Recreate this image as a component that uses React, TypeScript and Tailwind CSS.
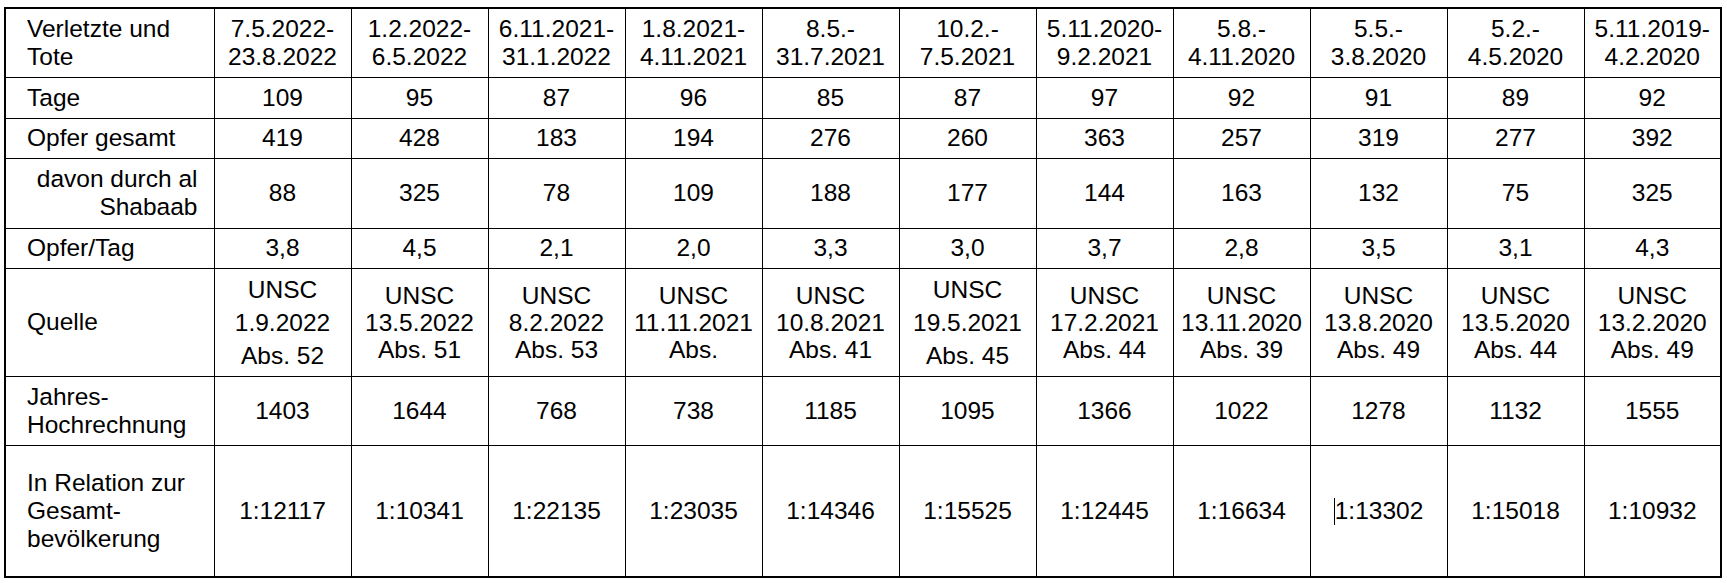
import React from "react";

type Col = {
  period: [string, string];
  tage: string;
  opfer: string;
  shabaab: string;
  proTag: string;
  quelle: [string, string];
  wide?: boolean;
  hoch: string;
  relation: string;
  cursor?: boolean;
};

const cols: Col[] = [
  { period: ["7.5.2022-", "23.8.2022"], tage: "109", opfer: "419", shabaab: "88", proTag: "3,8", quelle: ["1.9.2022", "Abs. 52"], wide: true, hoch: "1403", relation: "1:12117" },
  { period: ["1.2.2022-", "6.5.2022"], tage: "95", opfer: "428", shabaab: "325", proTag: "4,5", quelle: ["13.5.2022", "Abs. 51"], hoch: "1644", relation: "1:10341" },
  { period: ["6.11.2021-", "31.1.2022"], tage: "87", opfer: "183", shabaab: "78", proTag: "2,1", quelle: ["8.2.2022", "Abs. 53"], hoch: "768", relation: "1:22135" },
  { period: ["1.8.2021-", "4.11.2021"], tage: "96", opfer: "194", shabaab: "109", proTag: "2,0", quelle: ["11.11.2021", "Abs."], hoch: "738", relation: "1:23035" },
  { period: ["8.5.-", "31.7.2021"], tage: "85", opfer: "276", shabaab: "188", proTag: "3,3", quelle: ["10.8.2021", "Abs. 41"], hoch: "1185", relation: "1:14346" },
  { period: ["10.2.-", "7.5.2021"], tage: "87", opfer: "260", shabaab: "177", proTag: "3,0", quelle: ["19.5.2021", "Abs. 45"], wide: true, hoch: "1095", relation: "1:15525" },
  { period: ["5.11.2020-", "9.2.2021"], tage: "97", opfer: "363", shabaab: "144", proTag: "3,7", quelle: ["17.2.2021", "Abs. 44"], hoch: "1366", relation: "1:12445" },
  { period: ["5.8.-", "4.11.2020"], tage: "92", opfer: "257", shabaab: "163", proTag: "2,8", quelle: ["13.11.2020", "Abs. 39"], hoch: "1022", relation: "1:16634" },
  { period: ["5.5.-", "3.8.2020"], tage: "91", opfer: "319", shabaab: "132", proTag: "3,5", quelle: ["13.8.2020", "Abs. 49"], hoch: "1278", relation: "1:13302", cursor: true },
  { period: ["5.2.-", "4.5.2020"], tage: "89", opfer: "277", shabaab: "75", proTag: "3,1", quelle: ["13.5.2020", "Abs. 44"], hoch: "1132", relation: "1:15018" },
  { period: ["5.11.2019-", "4.2.2020"], tage: "92", opfer: "392", shabaab: "325", proTag: "4,3", quelle: ["13.2.2020", "Abs. 49"], hoch: "1555", relation: "1:10932" },
];

const cell = "border border-black text-center align-middle p-0 whitespace-nowrap";
const head = "border border-black text-left align-middle pl-[21px] pr-1 p-0";

export default function App() {
  return (
    <div className="min-h-screen bg-white pt-[7px] pl-[4px] font-['Liberation_Sans',Arial,sans-serif] text-[24.5px] leading-[28px] text-black">
      <table className="table-fixed border-collapse border-2 border-black w-[1718px]">
        <colgroup>
          <col className="w-[209px]" />
          {cols.map((_, i) => (
            <col key={i} className="w-[137px]" />
          ))}
        </colgroup>
        <tbody>
          <tr className="h-[69px]">
            <td className={head}>
              Verletzte und
              <br />
              Tote
            </td>
            {cols.map((c, i) => (
              <td key={i} className={cell}>
                {c.period[0]}
                <br />
                {c.period[1]}
              </td>
            ))}
          </tr>
          <tr className="h-[41px]">
            <td className={head}>Tage</td>
            {cols.map((c, i) => (
              <td key={i} className={cell}>{c.tage}</td>
            ))}
          </tr>
          <tr className="h-[40px]">
            <td className={head}>Opfer gesamt</td>
            {cols.map((c, i) => (
              <td key={i} className={cell}>{c.opfer}</td>
            ))}
          </tr>
          <tr className="h-[70px]">
            <td className="border border-black text-right align-middle pr-[16px] p-0">
              davon durch al
              <br />
              Shabaab
            </td>
            {cols.map((c, i) => (
              <td key={i} className={cell}>{c.shabaab}</td>
            ))}
          </tr>
          <tr className="h-[40px]">
            <td className={head}>Opfer/Tag</td>
            {cols.map((c, i) => (
              <td key={i} className={cell}>{c.proTag}</td>
            ))}
          </tr>
          <tr className="h-[108px]">
            <td className={head}>Quelle</td>
            {cols.map((c, i) => (
              <td key={i} className={cell}>
                <div className={c.wide ? "leading-[33px]" : "leading-[27px]"}>
                  UNSC
                  <br />
                  {c.quelle[0]}
                  <br />
                  {c.quelle[1]}
                </div>
              </td>
            ))}
          </tr>
          <tr className="h-[69px]">
            <td className={head}>
              Jahres-
              <br />
              Hochrechnung
            </td>
            {cols.map((c, i) => (
              <td key={i} className={cell}>{c.hoch}</td>
            ))}
          </tr>
          <tr className="h-[132px]">
            <td className={head}>
              In Relation zur
              <br />
              Gesamt-
              <br />
              bevölkerung
            </td>
            {cols.map((c, i) => (
              <td key={i} className={cell}>
                {c.cursor && (
                  <span className="inline-block w-px h-[27px] bg-black align-[-6px]" />
                )}
                {c.relation}
              </td>
            ))}
          </tr>
        </tbody>
      </table>
    </div>
  );
}
